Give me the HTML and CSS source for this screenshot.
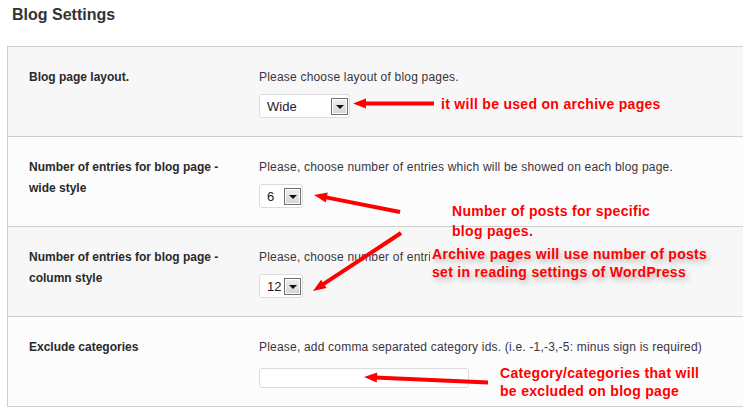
FILE: index.html
```html
<!DOCTYPE html>
<html>
<head>
<meta charset="utf-8">
<link rel="stylesheet" href="styles.css">
</head>
<body>
<div class="page">
  <h2 class="title">Blog Settings</h2>
  <div class="box">
    <div class="row odd">
      <div class="label">Blog page layout.</div>
      <div class="field">
        <div class="desc">Please choose layout of blog pages.</div>
        <div class="select wide"><span class="val">Wide</span><span class="btn"><span class="tri"></span></span></div>
      </div>
    </div>
    <div class="row even">
      <div class="label">Number of entries for blog page - wide style</div>
      <div class="field">
        <div class="desc">Please, choose number of entries which will be showed on each blog page.</div>
        <div class="select narrow"><span class="val">6</span><span class="btn"><span class="tri"></span></span></div>
      </div>
    </div>
    <div class="row odd">
      <div class="label">Number of entries for blog page - column style</div>
      <div class="field">
        <div class="desc covered">Please, choose number of entries which will be showed on each blog page.</div>
        <div class="select narrow"><span class="val">12</span><span class="btn"><span class="tri"></span></span></div>
      </div>
    </div>
    <div class="row even">
      <div class="label">Exclude categories</div>
      <div class="field">
        <div class="desc">Please, add comma separated category ids. (i.e. -1,-3,-5: minus sign is required)</div>
        <div class="input"></div>
      </div>
    </div>
  </div>

  <svg class="arrows" width="743" height="415" viewBox="0 0 743 415">
    <g fill="#f00" stroke="#f00">
      <g transform="translate(353 103.5)">
        <line x1="11" y1="0" x2="81" y2="0" stroke-width="4"/>
        <polygon points="0,0 13,-5 13,5" stroke="none"/>
      </g>
      <g transform="translate(314 195) rotate(11.18)">
        <line x1="11" y1="0" x2="87.7" y2="0" stroke-width="4"/>
        <polygon points="0,0 13,-5 13,5" stroke="none"/>
      </g>
      <g transform="translate(313 291) rotate(-33.39)">
        <line x1="11" y1="0" x2="105.4" y2="0" stroke-width="4"/>
        <polygon points="0,0 13,-5 13,5" stroke="none"/>
      </g>
      <g transform="translate(364 377) rotate(2.59)">
        <line x1="11" y1="0" x2="124.1" y2="0" stroke-width="4"/>
        <polygon points="0,0 13,-5 13,5" stroke="none"/>
      </g>
    </g>
  </svg>

  <div class="note n1">it will be used on archive pages</div>
  <div class="note n2">Number of posts for specific<br>blog pages.</div>
  <div class="note n3">Archive pages will use number of posts<br>set in reading settings of WordPress</div>
  <div class="note n4">Category/categories that will<br>be excluded on blog page</div>
</div>
</body>
</html>
```

FILE: styles.css
```css
html, body {
  margin: 0;
  padding: 0;
  background: #fff;
}

.page {
  position: relative;
  width: 743px;
  height: 415px;
  overflow: hidden;
  font-family: "Liberation Sans", Arial, sans-serif;
  color: #333;
}

.title {
  margin: 0 0 21px 0;
  padding: 5px 0 0 12px;
  font-size: 16px;
  line-height: 20px;
  font-weight: bold;
  color: #333;
}

.box {
  margin-left: 7px;
  border-top: 1px solid #cfcfcf;
  border-left: 1px solid #cfcfcf;
}

.row {
  display: grid;
  grid-template-columns: 251px 1fr;
  height: 90px;
  box-sizing: border-box;
  border-bottom: 1px solid #cfcfcf;
}

.row.odd { background: #f7f7f7; }
.row.even { background: #fcfcfc; }

.label {
  padding: 20px 30px 0 21px;
  font-size: 12px;
  line-height: 21px;
  font-weight: bold;
  color: #2a2a2a;
}

.field {
  padding-top: 20px;
}

.desc {
  font-size: 12px;
  line-height: 21px;
  letter-spacing: 0.2px;
  color: #3a3440;
  white-space: nowrap;
}

.desc.covered {
  width: 171px;
  overflow: hidden;
}

.select {
  margin-top: 6px;
  height: 24px;
  box-sizing: border-box;
  border: 1px solid #dcdcdc;
  border-radius: 3px;
  background: #fff;
  display: flex;
  align-items: center;
  justify-content: space-between;
  padding: 0 1px 0 7px;
  font-size: 13px;
  color: #222;
}

.select.wide { width: 91px; }
.select.narrow { width: 44px; }

.btn {
  width: 17px;
  height: 17px;
  box-sizing: border-box;
  border: 1px solid #6d6d6d;
  background: linear-gradient(#f0f0f0, #d4d4d4);
  box-shadow: inset 0 0 0 1px #fff;
  display: flex;
  align-items: center;
  justify-content: center;
}

.tri {
  width: 0;
  height: 0;
  border-left: 4px solid transparent;
  border-right: 4px solid transparent;
  border-top: 4px solid #111;
  margin-top: 1px;
}

.input {
  margin-top: 10px;
  width: 210px;
  height: 20px;
  box-sizing: border-box;
  border: 1px solid #dcdcdc;
  border-radius: 3px;
  background: #fff;
}

.arrows {
  position: absolute;
  left: 0;
  top: 0;
}

.note {
  position: absolute;
  font-size: 14px;
  font-weight: bold;
  letter-spacing: 0.3px;
  color: #f00;
  white-space: nowrap;
}

.n1 { left: 441px; top: 94px; line-height: 20px; }
.n2 { left: 452px; top: 202px; line-height: 19.5px; }
.n3 {
  left: 432px;
  top: 245px;
  line-height: 18px;
  text-shadow: 2px 3px 6px rgba(0, 0, 0, 0.3);
}
.n4 { left: 500px; top: 364px; line-height: 18px; }
```
